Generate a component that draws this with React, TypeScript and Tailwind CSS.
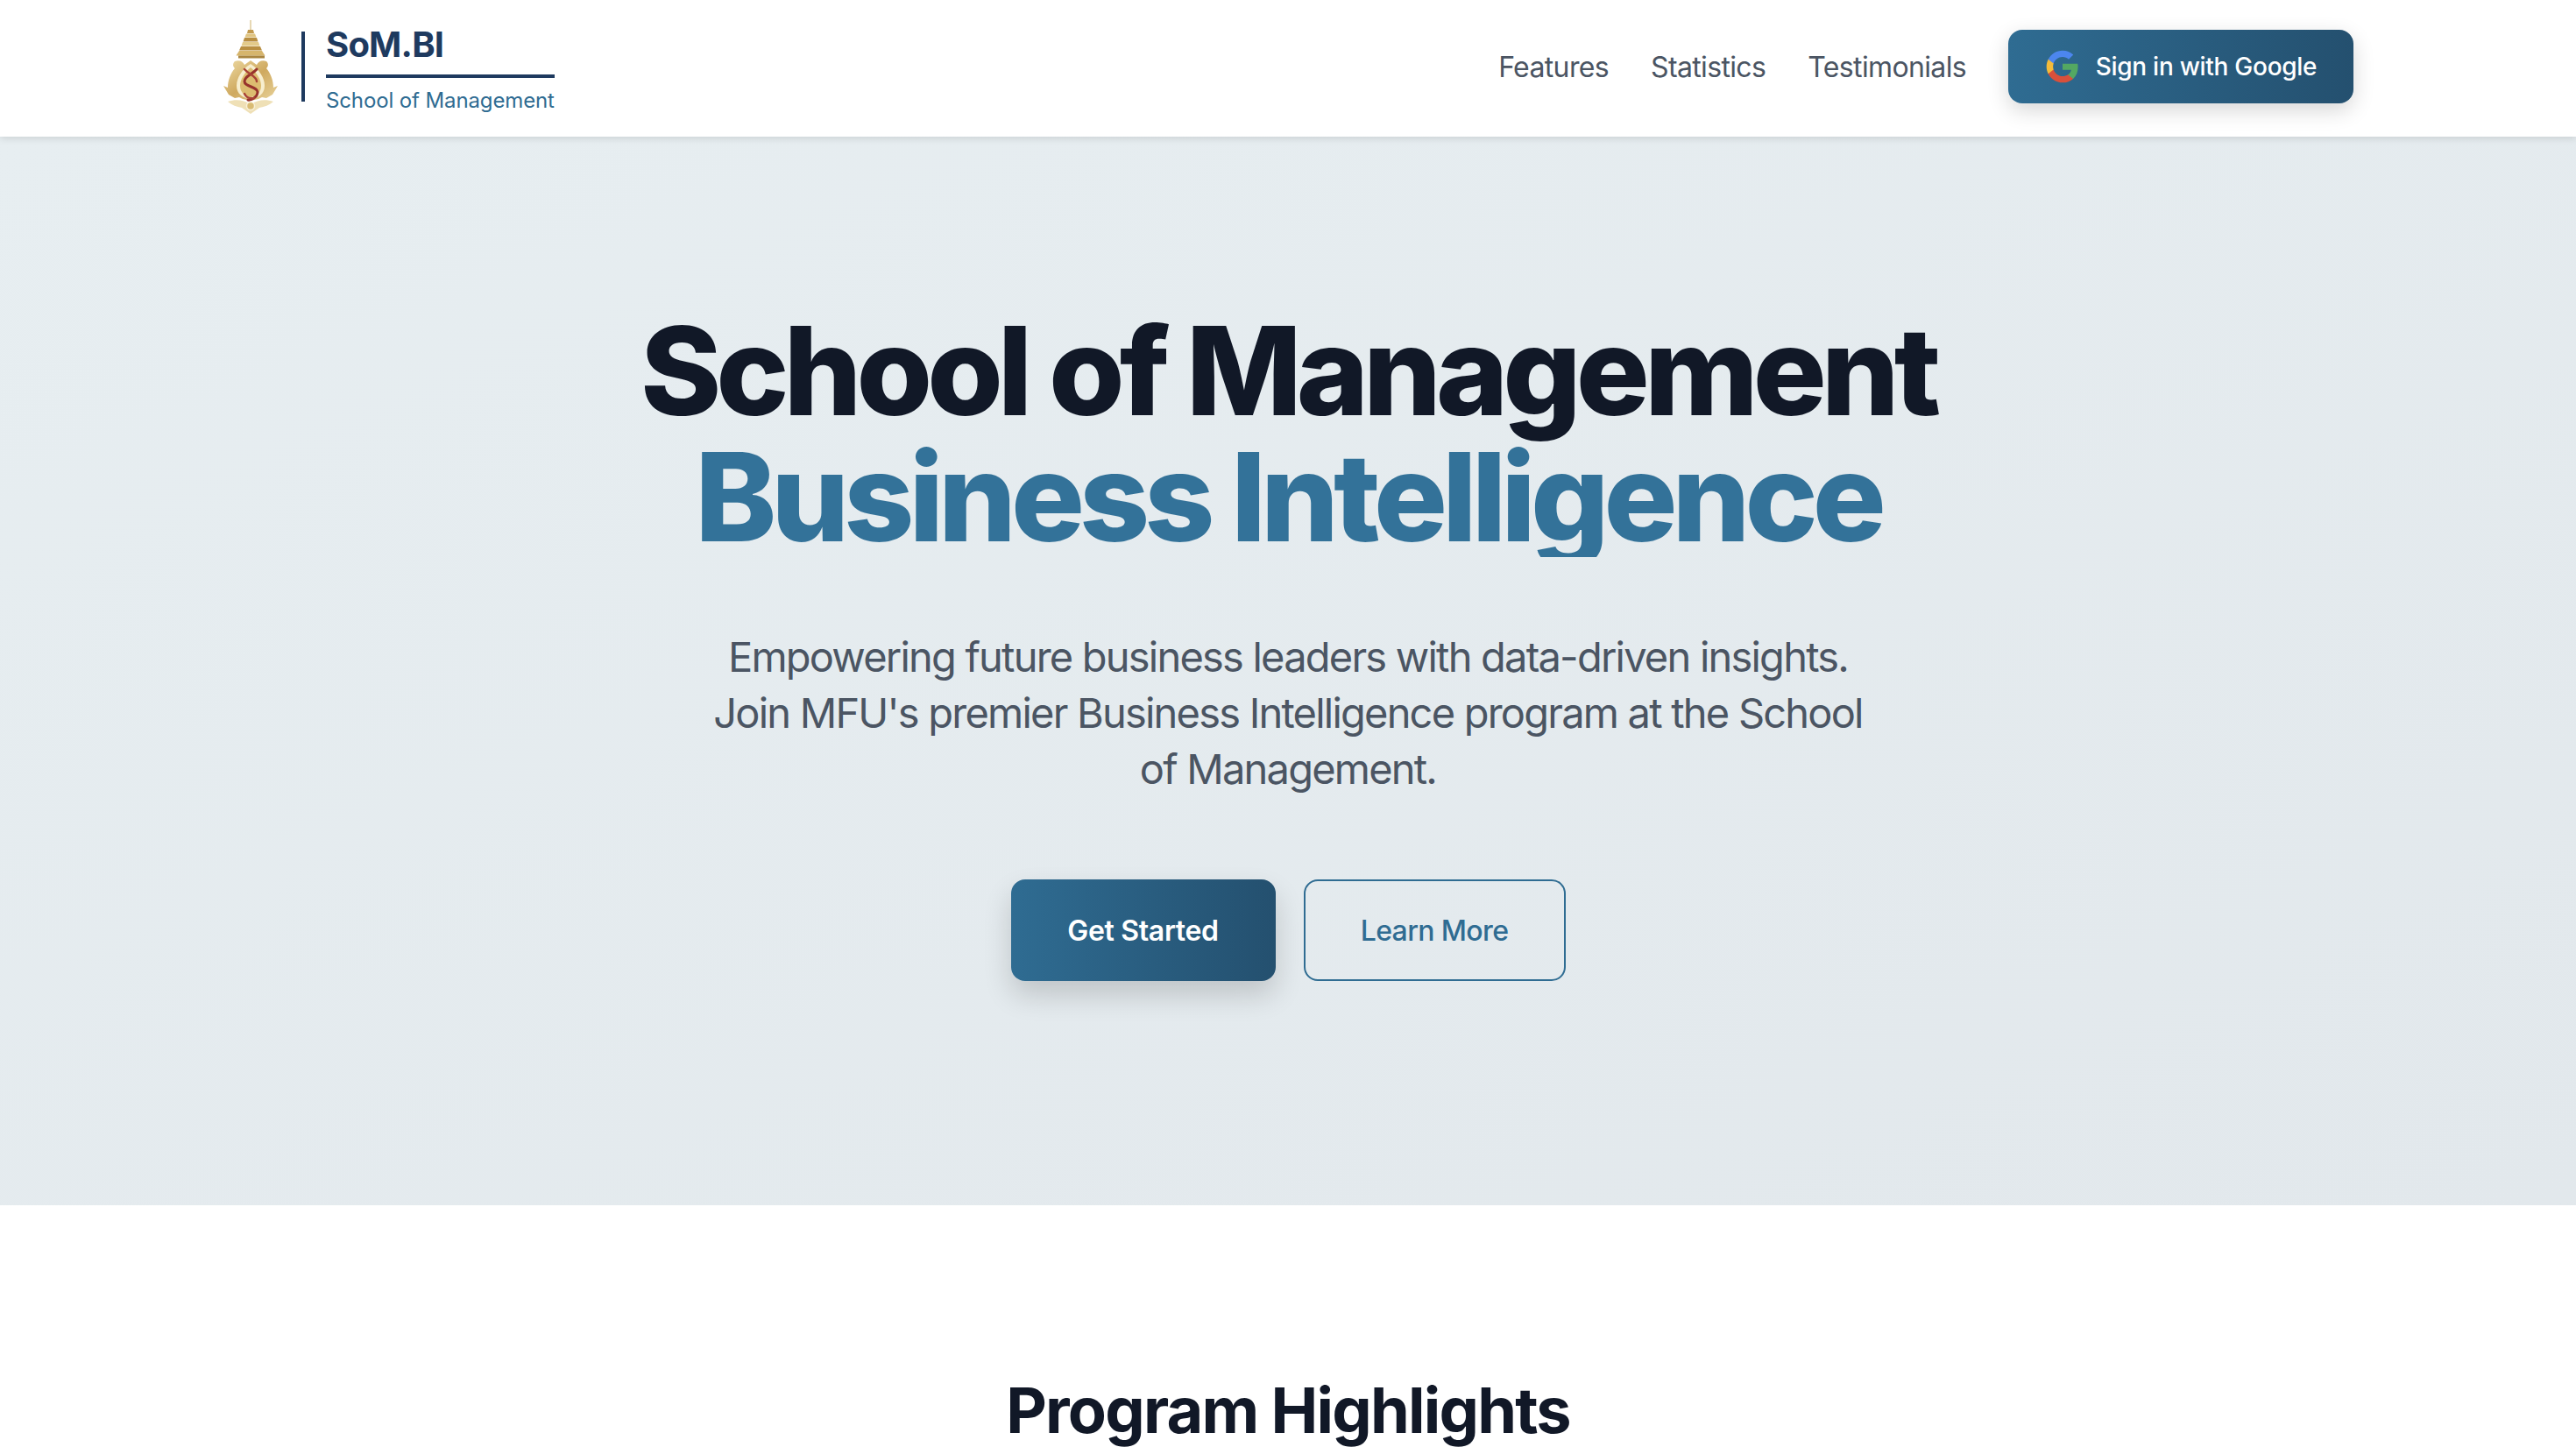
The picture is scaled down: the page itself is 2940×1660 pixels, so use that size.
const inter = "font-['Inter','Liberation_Sans',sans-serif] [font-variation-settings:'opsz'_32]";

function Logo() {
  return (
    <svg viewBox="14 10 66 110" className="h-[110px] w-[66px] shrink-0" aria-label="MFU crest">
      <defs>
        <linearGradient id="gold" x1="0" y1="0" x2="1" y2="1">
          <stop offset="0" stopColor="#eedca6" />
          <stop offset="0.5" stopColor="#cfa95f" />
          <stop offset="1" stopColor="#e9d49c" />
        </linearGradient>
      </defs>
      <rect x="45" y="12" width="2" height="11" fill="#e7d8b4" />
      <path d="M43 23h6l1 4h-8z" fill="#c29a4e" />
      <path d="M41 27.5h10l1.5 4h-13z" fill="#e0c583" />
      <path d="M39 32h14l1.5 4.500h-17z" fill="#b98f42" />
      <path d="M37 37h18l1.5 4.500h-21z" fill="#e3ca8a" />
      <path d="M35 42h22l2 4.500h-26z" fill="#b98f42" />
      <path d="M33 47h26l3.500 5.500h-33z" fill="#d6b56c" />
      <rect x="32" y="52.500" width="30" height="3" fill="#a98540" />
      <path
        d="M28 59c5-2 9 0 11 4l7-5 7 5c2-4 6-6 11-4 3 3 2 6 0 8 5 6 8 14 8 22l5-2-6 10-7 4-5-1-4 2-9 2-9-2-4-2-5 1-7-4-6-10 5 2c0-8 3-16 8-22-2-2-3-5 0-8z"
        fill="url(#gold)"
      />
      <path d="M46 62c10 6 16 16 16 25 0 9-7 14-16 15-9-1-16-6-16-15 0-9 6-19 16-25z" fill="#f7eecf" />
      <path d="M46 66c7 6 12 14 12 21 0 8-6 12-12 13-6-1-12-5-12-13 0-7 5-15 12-21z" fill="#dcbc70" />
      <path d="M53 68C48 74 39 76 39 82 39 88 54 88 54 94 54 100 46 104 43 103" fill="none" stroke="#97322c" strokeWidth="3" strokeLinecap="round" />
      <path d="M39 68C44 74 53 76 53 82M39 96C41 100 45 102 50 101" fill="none" stroke="#a84236" strokeWidth="2.500" strokeLinecap="round" />
      <path d="M20 105c9-3 18-2 26 3 8-5 17-6 26-3-5 4-10 6-16 7l-10 7-10-7c-6-1-11-3-16-7z" fill="#efe0b6" />
      <circle cx="46" cy="110" r="4.500" fill="#d9bb73" stroke="#f8f0d8" strokeWidth="1.500" />
    </svg>
  );
}

function GoogleIcon() {
  return (
    <svg viewBox="0 0 24 24" className="h-10 w-10 shrink-0" aria-hidden="true">
      <path d="M22.56 12.25c0-.78-.07-1.53-.2-2.25H12v4.26h5.92c-.26 1.37-1.04 2.53-2.21 3.31v2.77h3.57c2.08-1.92 3.28-4.74 3.28-8.09z" fill="#53a862" />
      <path d="M12 23c2.97 0 5.46-.98 7.28-2.66l-3.57-2.77c-.98.66-2.23 1.06-3.71 1.06-2.86 0-5.29-1.93-6.16-4.53H2.18v2.84C3.99 20.53 7.7 23 12 23z" fill="#d8503b" />
      <path d="M5.84 14.09c-.22-.66-.35-1.36-.35-2.09s.13-1.43.35-2.09V7.07H2.18C1.43 8.55 1 10.22 1 12s.43 3.45 1.18 4.93l2.85-2.22.81-.62z" fill="#f3bb3a" />
      <path d="M12 5.38c1.62 0 3.06.56 4.21 1.64l3.15-3.15C17.45 2.09 14.97 1 12 1 7.7 1 3.99 3.47 2.18 7.07l3.66 2.84c.87-2.6 3.3-4.53 6.16-4.53z" fill="#4c86ee" />
    </svg>
  );
}

export default function App() {
  return (
    <div className={`h-screen overflow-hidden bg-white ${inter}`}>
      <nav className="relative z-10 h-[156px] bg-white shadow-[0_2px_8px_rgba(0,0,0,0.12)]">
        <div className="mx-auto flex h-[152px] max-w-[2560px] items-center justify-between px-16">
          <div className="flex items-center">
            <Logo />
            <div className="ml-6 h-20 w-1 bg-[#1e3a5f]" />
            <div className="ml-6 flex w-[261px] flex-col">
              <span className="mt-[6px] text-[40px] leading-[48px] font-bold tracking-[-0.02em] text-[#1e3a5f]">SoM.BI</span>
              <div className="mt-[10px] h-1 bg-[#1e3a5f]" />
              <span className="mt-[10px] text-2xl leading-8 whitespace-nowrap tracking-[-0.005em] text-[#2f6c92]">School of Management</span>
            </div>
          </div>
          <div className="flex items-center gap-12">
            <a className="mt-[2px] text-[32px] leading-[48px] tracking-[-0.02em] text-[#4b5563]">Features</a>
            <a className="mt-[2px] text-[32px] leading-[48px] tracking-[-0.02em] text-[#4b5563]">Statistics</a>
            <a className="mt-[2px] text-[32px] leading-[48px] tracking-[-0.02em] text-[#4b5563]">Testimonials</a>
            <button className="flex h-[84px] w-[394px] items-center justify-center gap-[18px] rounded-2xl bg-gradient-to-r from-[#2f6c92] to-[#24506f] text-[28px] font-medium tracking-[-0.01em] text-white shadow-[0_8px_24px_rgba(0,0,0,0.16)]">
              <GoogleIcon />
              Sign in with Google
            </button>
          </div>
        </div>
      </nav>

      <section className="flex h-[1220px] flex-col items-center bg-gradient-to-br from-[#e7eef1] to-[#e2e8ec] pt-[195px]">
        <h1 className="text-center text-[140px] leading-[144px] font-extrabold tracking-[-0.043em] text-[#111827]">
          <span className="block">School of Management</span>
          <span className="block h-[141px] bg-[#337299] bg-clip-text text-transparent">Business Intelligence</span>
        </h1>
        <p className="mt-[82px] w-[1344px] text-center text-[47px] leading-16 tracking-[-0.038em] text-[#4b5563]">
          Empowering future business leaders with data-driven insights. Join MFU's premier Business Intelligence program at the School of Management.
        </p>
        <div className="mt-[94px] flex gap-8">
          <button className="h-[116px] w-[302px] rounded-2xl bg-gradient-to-r from-[#2f6c92] to-[#24506f] pt-[2px] text-[32px] font-semibold tracking-[-0.01em] text-white shadow-[0_16px_32px_rgba(0,0,0,0.16)]">
            Get Started
          </button>
          <button className="h-[116px] w-[299px] rounded-2xl border-2 border-[#2f6c92] pt-[2px] text-[32px] font-medium tracking-[-0.02em] text-[#2f6c92]">
            Learn More
          </button>
        </div>
      </section>

      <section className="flex flex-col items-center bg-white pt-[194px]">
        <h2 className="text-center text-[72px] leading-[80px] font-bold tracking-tight text-[#111827]">Program Highlights</h2>
      </section>
    </div>
  );
}
